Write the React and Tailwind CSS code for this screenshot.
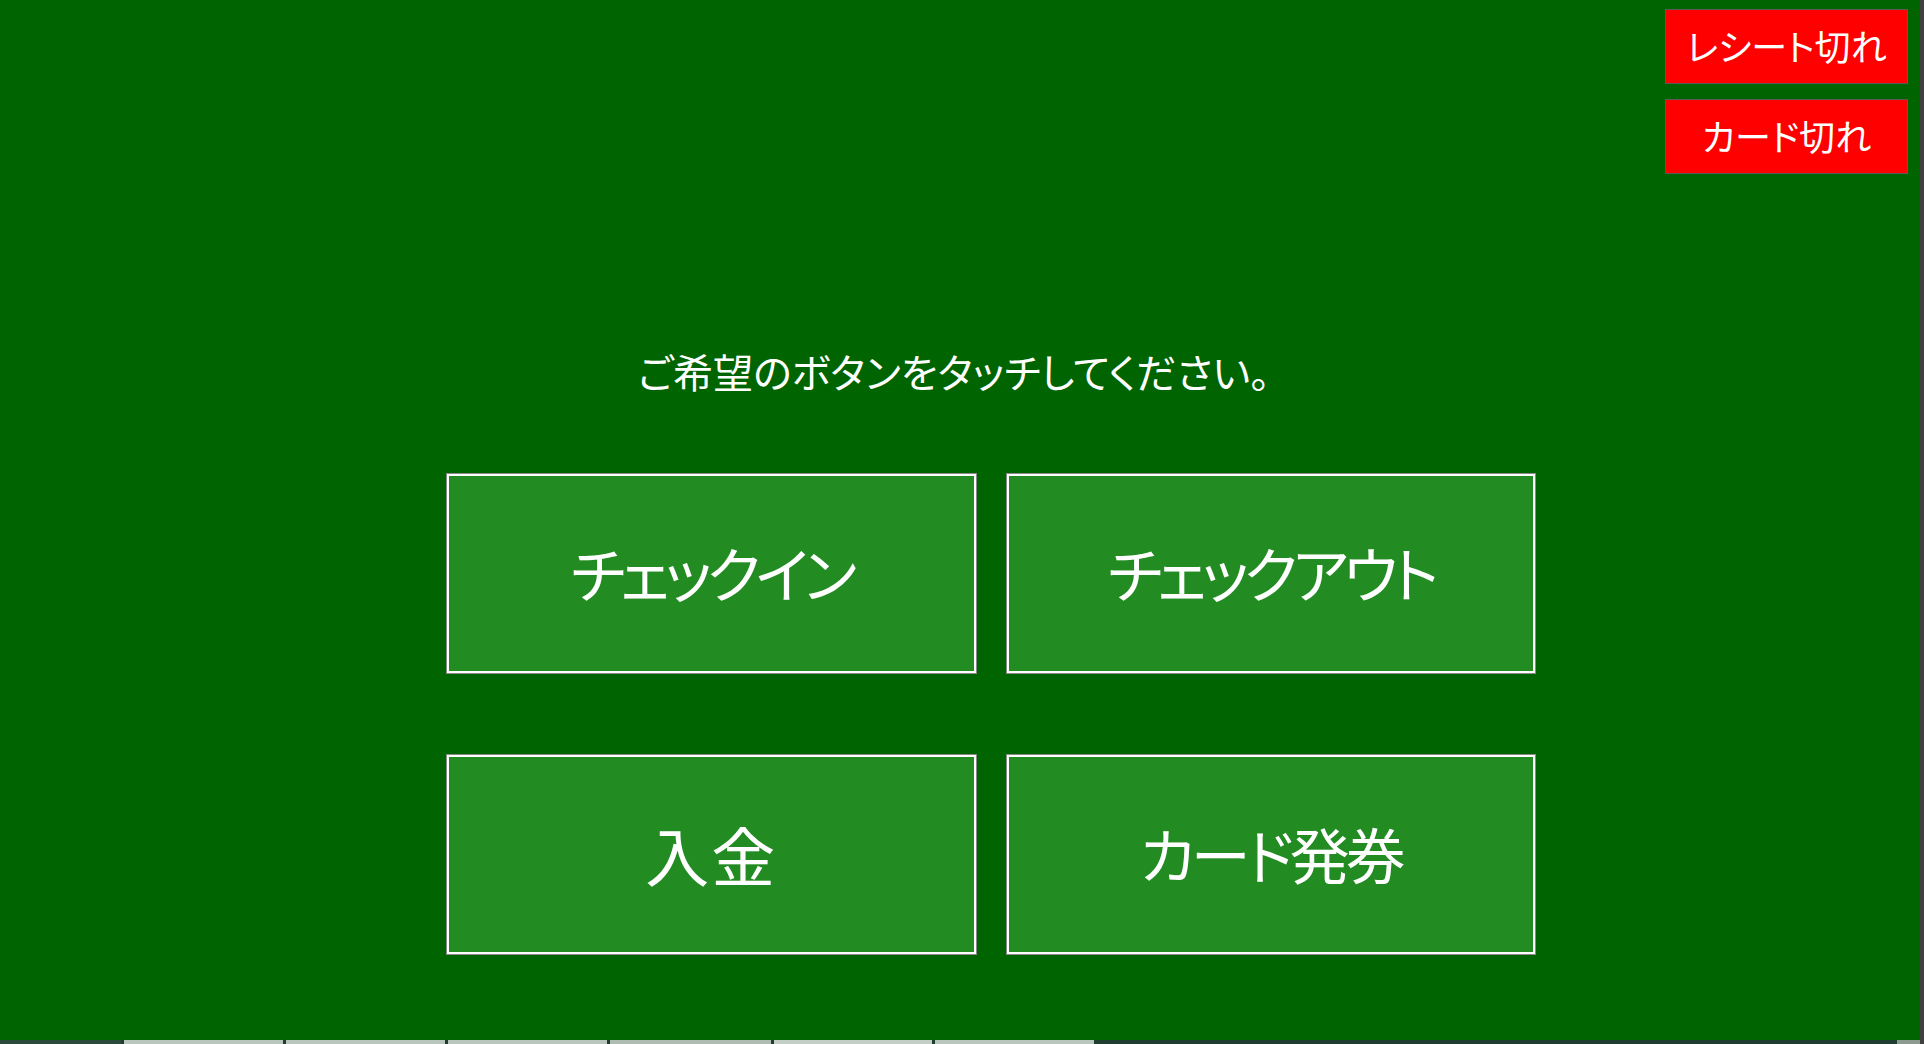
import React from 'react';

const MENU = [
  { label: 'チェックイン', cls: 'text-[60px] tracking-[-5px]' },
  { label: 'チェックアウト', cls: 'text-[60px] tracking-[-5px]' },
  { label: '入金', cls: 'text-[64px] tracking-[2px]' },
  { label: 'カード発券', cls: 'text-[60px] tracking-[-4px]' },
];
const ALERTS = ['レシート切れ', 'カード切れ'];

// taskbar peeking in at the bottom edge
const TABS = [
  { w: 121, c: 'bg-[#2c4a3c]' },
  { w: 159, c: 'bg-[#b9c6bd]' },
  { w: 159, c: 'bg-[#b9c6bd]' },
  { w: 159, c: 'bg-[#b9c6bd]' },
  { w: 161, c: 'bg-[#aebcb2]' },
  { w: 158, c: 'bg-[#c3cec6]' },
  { w: 159, c: 'bg-[#b9c6bd]' },
];

const App = () => {
  return (
    <div className="flex h-[1044px] w-[1924px] flex-col overflow-hidden bg-[#006400] font-['Noto_Sans_CJK_JP','Noto_Sans',sans-serif] text-white [font-feature-settings:'palt']">
      <div className="flex flex-1">
        <main className="flex flex-1 flex-col">
          {/* Status alerts */}
          <div className="flex justify-end pt-[9px] pr-[12px]">
            <div className="flex flex-col gap-[15px]">
              {ALERTS.map((label) => (
                <div
                  key={label}
                  className="flex h-[75px] w-[243px] items-center justify-center border border-[#5a5a5a] bg-[#ff0000] pb-[4px] text-[36px] leading-none"
                >
                  {label}
                </div>
              ))}
            </div>
          </div>

          <p className="mt-[172px] pr-[12px] text-center text-[40px] leading-[50px]">
            ご希望のボタンをタッチしてください。
          </p>

          {/* Menu buttons */}
          <div className="mt-[78px] ml-[447px] grid w-[1088px] grid-cols-2 gap-x-[31px] gap-y-[82px]">
            {MENU.map((item) => (
              <button
                key={item.label}
                className={`flex h-[199px] items-center justify-center border-2 border-white bg-[#228b22] pb-[4px] leading-none text-white shadow-[0_0_0_1px_#8a8a8a] ${item.cls}`}
              >
                {item.label}
              </button>
            ))}
          </div>
        </main>
        <div className="w-[4px] bg-[#404040]" />
      </div>

      <div className="flex h-[4px] bg-[#1f3d30]">
        {TABS.map((t, i) => (
          <div key={i} className={`mr-[3px] h-full ${t.c}`} style={{ width: t.w }} />
        ))}
        <div className="flex-1" />
        <div className="h-full w-[23px] bg-[#8c9a90]" />
        <div className="h-full w-[4px] bg-[#404040]" />
      </div>
    </div>
  );
};

export default App;
